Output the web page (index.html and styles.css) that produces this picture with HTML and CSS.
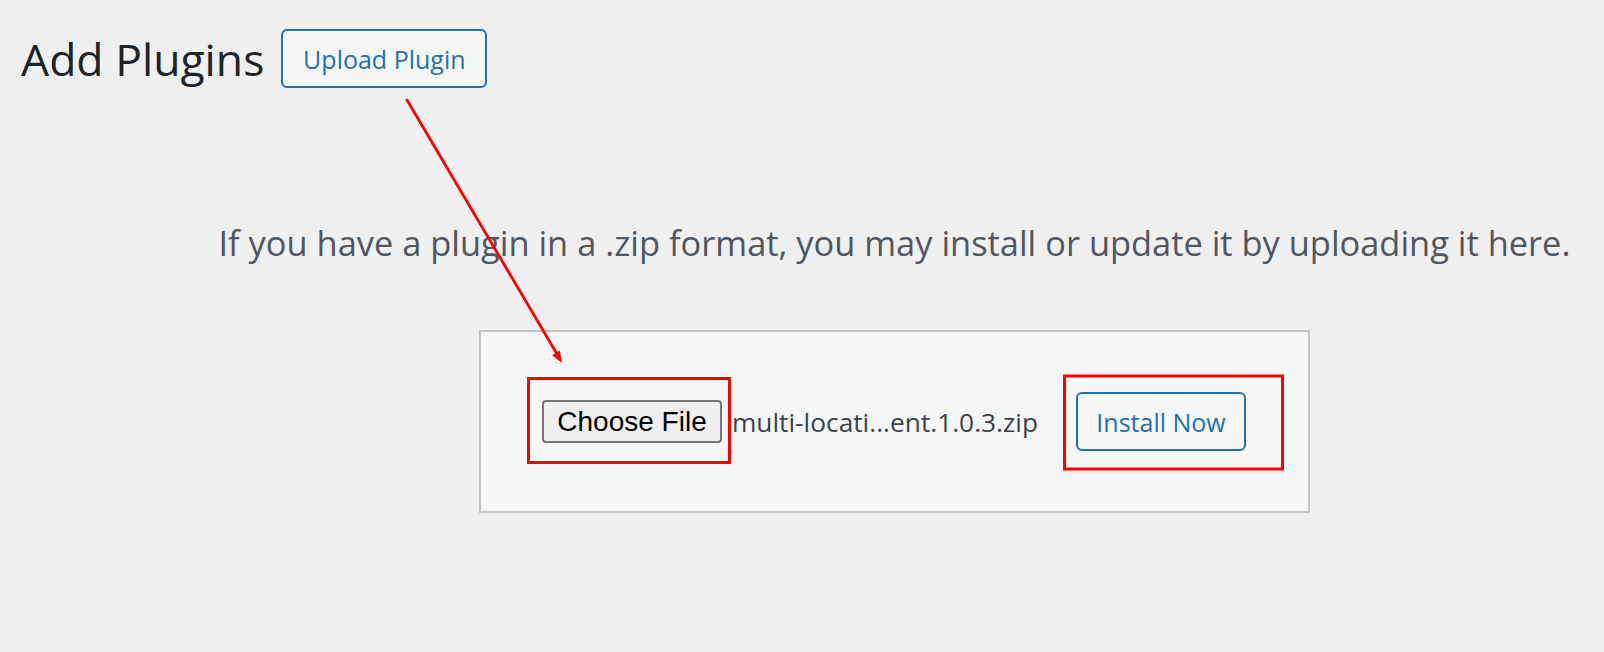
FILE: index.html
```html
<!DOCTYPE html>
<html lang="en">
<head>
<meta charset="utf-8">
<title>Add Plugins</title>
<link rel="stylesheet" href="styles.css">
</head>
<body>
<div class="page">
  <div class="header">
    <h1 class="title">Add Plugins</h1>
    <a class="btn btn-outline upload" href="#">Upload Plugin</a>
  </div>
  <div class="upload-area">
    <p class="help">If you have a plugin in a .zip format, you may install or update it by uploading it here.</p>
    <form class="upload-form">
      <div class="file-field">
        <span class="file-btn">Choose File</span>
        <span class="file-name">multi-locati...ent.1.0.3.zip</span>
      </div>
      <span class="btn btn-outline install">Install Now</span>
    </form>
  </div>
  <svg class="annotations" width="1604" height="652" viewBox="0 0 1604 652" aria-hidden="true">
    <rect x="528.5" y="378.5" width="201" height="84" fill="none" stroke="#ff0000" stroke-width="3"/>
    <rect x="1064.5" y="376" width="218" height="93" fill="none" stroke="#ff0000" stroke-width="3"/>
    <line x1="407" y1="100" x2="557" y2="354" stroke="#ff0000" stroke-width="2.8" stroke-linecap="round"/>
    <polygon points="562,363 552.2,355.2 559.8,350.6" fill="#ff0000"/>
  </svg>
</div>
</body>
</html>
```
FILE: styles.css
```css
html, body {
  margin: 0;
  padding: 0;
}
body {
  background: #f0f0f1;
  font-family: "Open Sans", "Noto Sans", sans-serif;
  overflow: hidden;
}
.page {
  position: relative;
  width: 1604px;
  height: 652px;
}
.header {
  display: flex;
  align-items: center;
  gap: 17px;
  padding: 29px 0 0 21px;
}
.title {
  margin: 0;
  font-size: 44.5px;
  font-weight: 400;
  line-height: 59px;
  color: #1d2327;
}
.btn {
  display: inline-flex;
  align-items: center;
  justify-content: center;
  box-sizing: border-box;
  height: 59px;
  border: 2px solid #2271b1;
  border-radius: 6px;
  background: #f6f7f7;
  color: #2271b1;
  font-size: 25px;
  text-decoration: none;
}
.upload {
  width: 206px;
}
.upload-area {
  box-sizing: border-box;
  width: 1604px;
  padding-left: 185px;
  display: flex;
  flex-direction: column;
  align-items: center;
}
.help {
  margin: 131px 0 0;
  font-size: 34.4px;
  line-height: 48px;
  color: #50575e;
  white-space: nowrap;
}
.upload-form {
  box-sizing: border-box;
  width: 831px;
  height: 183px;
  margin-top: 63px;
  display: flex;
  align-items: center;
  padding-left: 61px;
  border: 2px solid #c3c4c7;
  background: #f6f7f7;
}
.file-field {
  display: flex;
  align-items: center;
  gap: 10px;
}
.file-btn {
  box-sizing: border-box;
  width: 180px;
  height: 43px;
  display: inline-flex;
  align-items: center;
  justify-content: center;
  border: 2px solid #767676;
  border-radius: 4px;
  background: #efefef;
  color: #000;
  font-family: "Liberation Sans", Arial, sans-serif;
  font-size: 28px;
}
.file-name {
  font-size: 26.3px;
  color: #3c434a;
}
.install {
  width: 170px;
  margin-left: 38px;
}
.annotations {
  position: absolute;
  left: 0;
  top: 0;
  pointer-events: none;
}
```
